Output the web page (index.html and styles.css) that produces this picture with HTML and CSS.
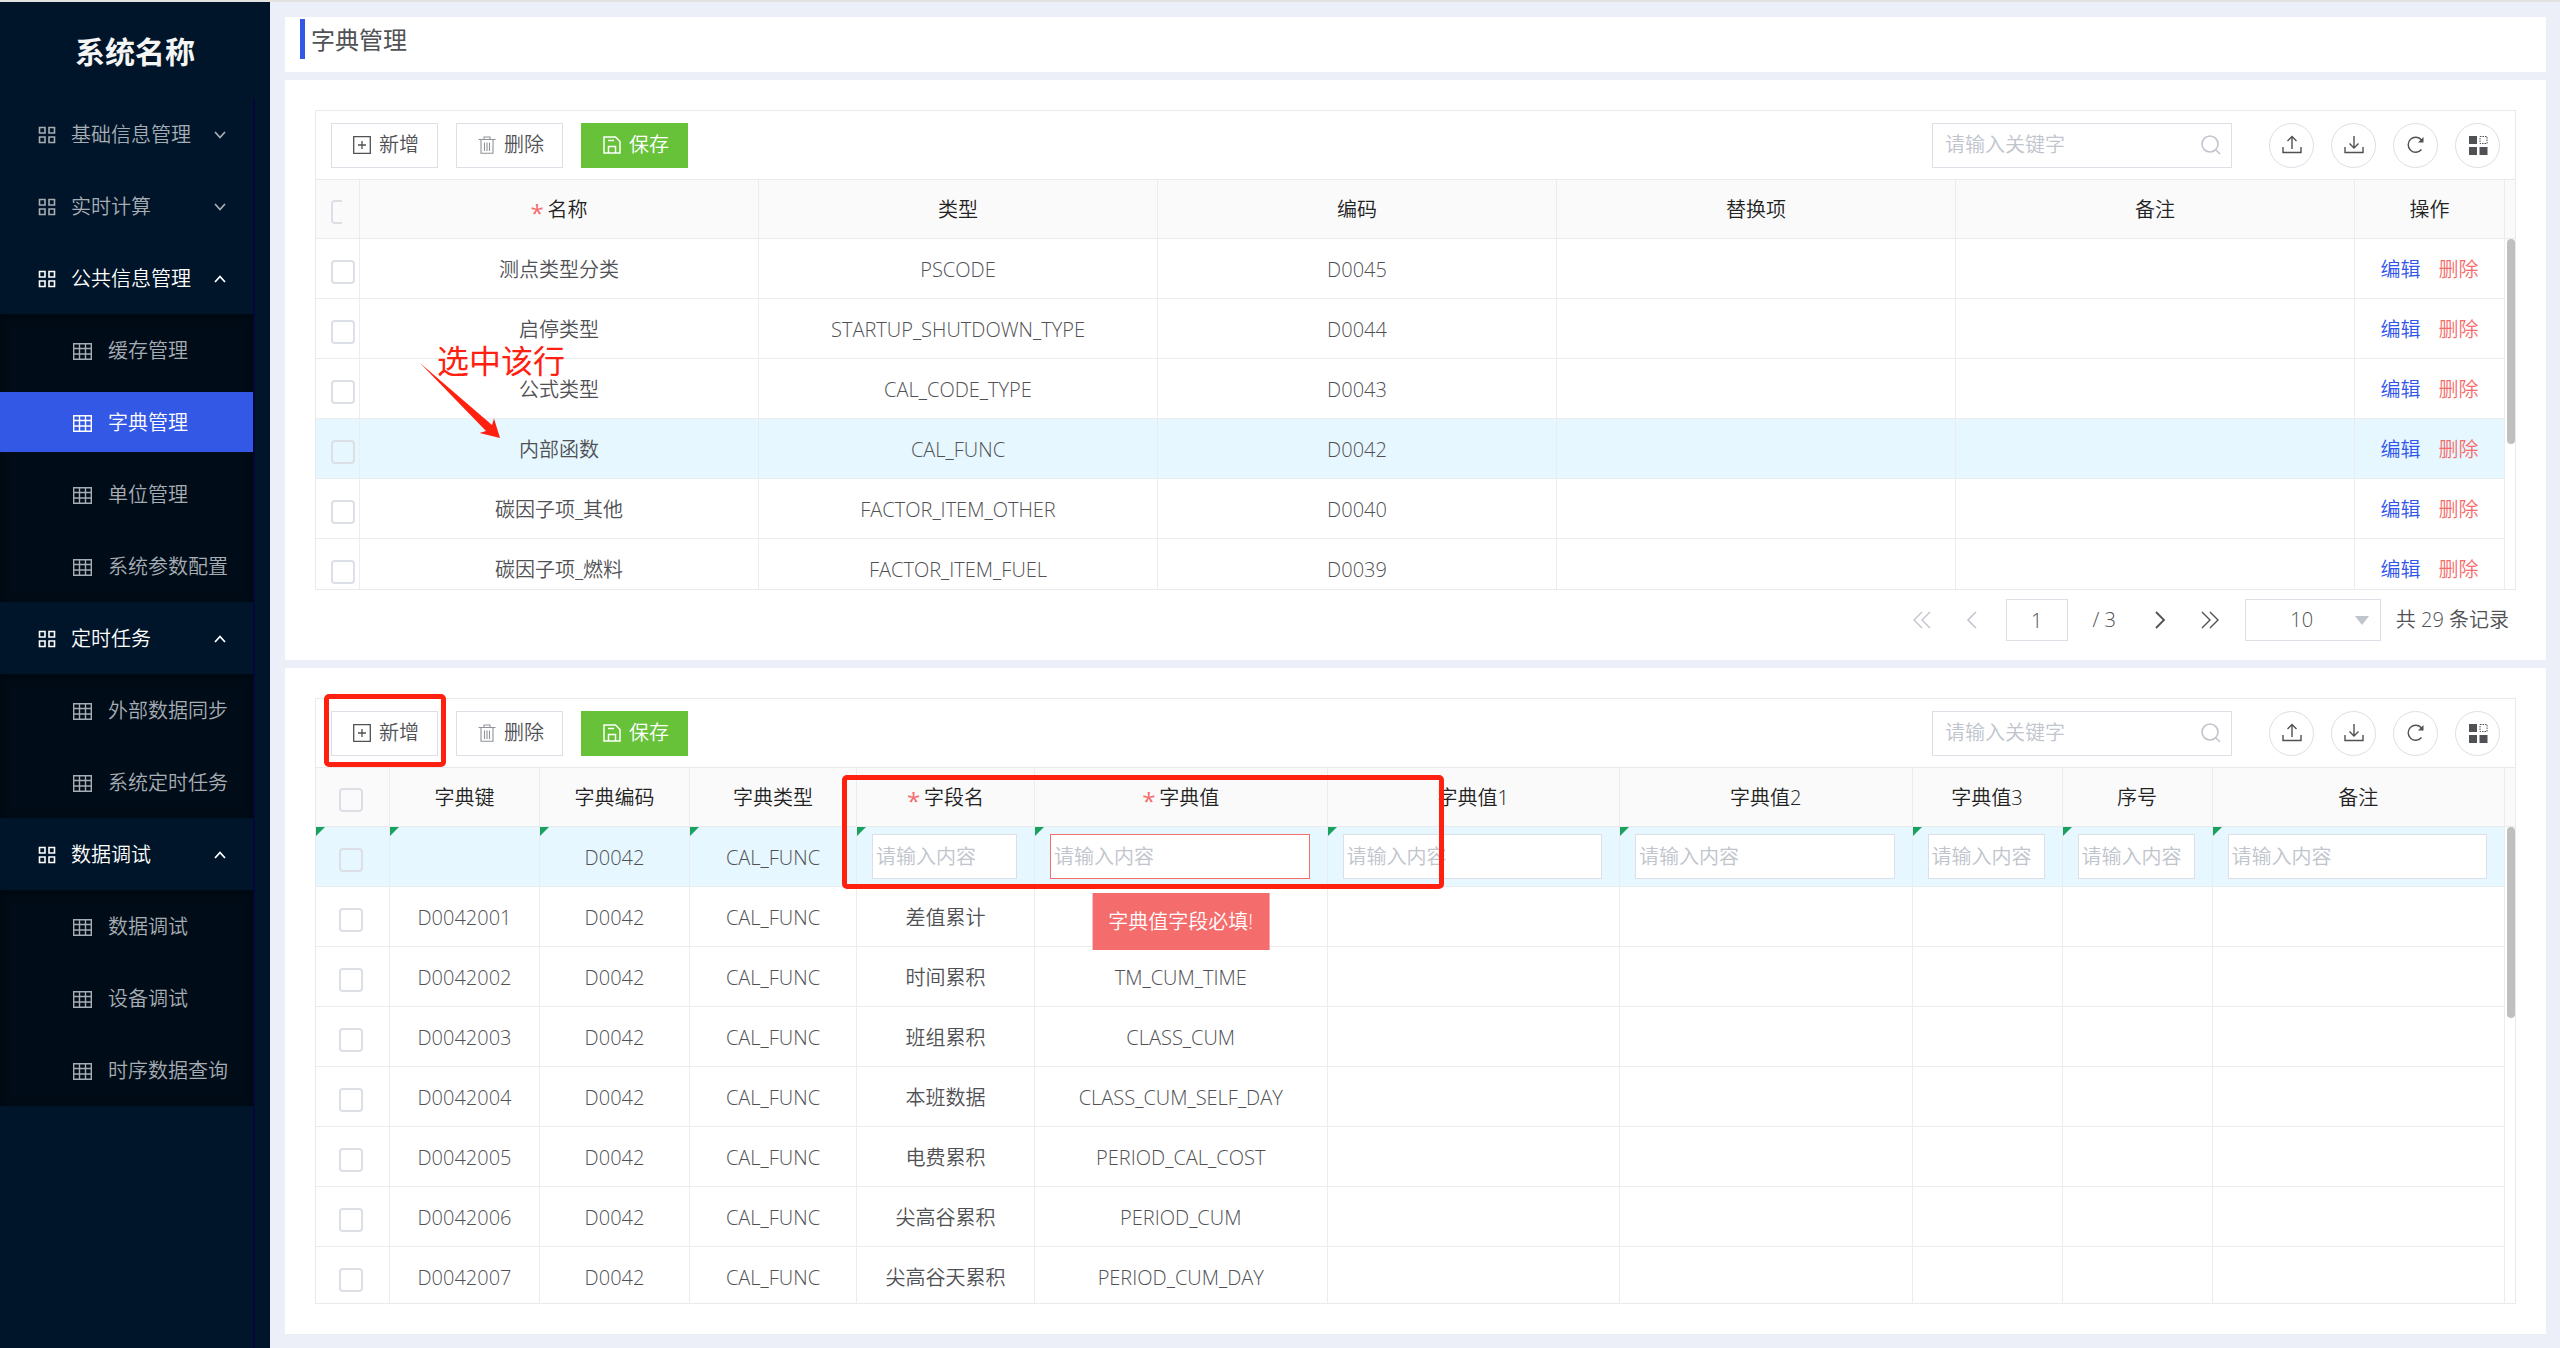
FILE: index.html
```html
<!DOCTYPE html>
<html lang="zh-CN">
<head>
    <meta charset="UTF-8">
    <meta name="viewport" content="width=device-width, initial-scale=1.0">
    <title>字典管理</title>
    <link rel="stylesheet" href="styles.css">
</head>
<body>
    <!-- 图标 -->
    <svg class="sprite" aria-hidden="true">
        <symbol id="i-menu" viewBox="0 0 18 18"><path d="M1.5 1.5h5.5v5.5H1.5zM11 1.5h5.5v5.5H11zM1.5 11h5.5v5.5H1.5zM11 11h5.5v5.5H11z" fill="none" stroke="currentColor" stroke-width="1.6"/></symbol>
        <symbol id="i-grid" viewBox="0 0 19 17"><path d="M.7.7h17.6v15.6H.7zM.7 5.5h17.6M.7 11h17.6M6.5.7v15.6M12.5.7v15.6" fill="none" stroke="currentColor" stroke-width="1.4"/></symbol>
        <symbol id="i-down" viewBox="0 0 12 8"><path d="M1 1l5 5.5L11 1" fill="none" stroke="currentColor" stroke-width="1.8"/></symbol>
        <symbol id="i-up" viewBox="0 0 12 8"><path d="M1 7l5-5.5L11 7" fill="none" stroke="currentColor" stroke-width="1.8"/></symbol>
        <symbol id="i-add" viewBox="0 0 18 18"><path d="M.7.7h16.6v16.6H.7zM9 5v8M5 9h8" fill="none" stroke="currentColor" stroke-width="1.3"/></symbol>
        <symbol id="i-del" viewBox="0 0 18 18"><path d="M.5 3.5h17M6 3.5V1h6v2.500M3 3.500v13.800h12V3.500M6.500 6.500v8.500M9 6.500v8.500M11.500 6.500v8.500" fill="none" stroke="currentColor" stroke-width="1.1"/></symbol>
        <symbol id="i-save" viewBox="0 0 18 18"><path d="M1 1h11.500L17 5.500V17H1zM5.500 17v-6.500h7V17M5 4.500h6" fill="none" stroke="currentColor" stroke-width="1.5"/></symbol>
        <symbol id="i-search" viewBox="0 0 20 20"><path d="M9 1a8 8 0 1 0 0 16a8 8 0 1 0 0-16zM14.800 14.800L19 19" fill="none" stroke="currentColor" stroke-width="1.6"/></symbol>
        <symbol id="i-upload" viewBox="0 0 20 20"><path d="M1 12v5.500h18V12M10 14V2M5.500 6L10 1.500L14.500 6" fill="none" stroke="currentColor" stroke-width="1.4"/></symbol>
        <symbol id="i-download" viewBox="0 0 20 20"><path d="M1 12v5.500h18V12M10 1v11.500M5.500 8.500L10 13l4.500-4.500" fill="none" stroke="currentColor" stroke-width="1.4"/></symbol>
        <symbol id="i-refresh" viewBox="0 0 20 20"><path d="M15.500 14.500A7.500 7.500 0 1 1 15.500 5" fill="none" stroke="currentColor" stroke-width="1.4"/><path d="M17.500 2v5.500h-5.500z" fill="currentColor"/></symbol>
        <symbol id="i-custom" viewBox="0 0 20 20"><path d="M1 1h8v8H1zM1 12h8v8H1zM11.500 12h8v8h-8z" fill="currentColor"/><path d="M12 1.500h7v7h-7z" fill="none" stroke="currentColor" stroke-dasharray="1.500 1"/></symbol>
        <symbol id="i-first" viewBox="0 0 20 18"><path d="M10 1L2 9l8 8M18 1l-8 8l8 8" fill="none" stroke="currentColor" stroke-width="1.4"/></symbol>
        <symbol id="i-prev" viewBox="0 0 20 18"><path d="M14 1L6 9l8 8" fill="none" stroke="currentColor" stroke-width="1.6"/></symbol>
        <symbol id="i-next" viewBox="0 0 20 18"><path d="M6 1l8 8l-8 8" fill="none" stroke="currentColor" stroke-width="1.8"/></symbol>
        <symbol id="i-last" viewBox="0 0 20 18"><path d="M10 1l8 8l-8 8M2 1l8 8l-8 8" fill="none" stroke="currentColor" stroke-width="1.4"/></symbol>
    </svg>

    <div class="app">
        <aside class="sidebar">
            <div class="logo">系统名称</div>
            <nav class="menu">
                <button class="menu-title"><svg class="ico-menu"><use href="#i-menu"/></svg><span>基础信息管理</span><svg class="caret"><use href="#i-down"/></svg></button>
                <button class="menu-title"><svg class="ico-menu"><use href="#i-menu"/></svg><span>实时计算</span><svg class="caret"><use href="#i-down"/></svg></button>
                <button class="menu-title open"><svg class="ico-menu"><use href="#i-menu"/></svg><span>公共信息管理</span><svg class="caret"><use href="#i-up"/></svg></button>
                <div class="submenu">
                    <a href="#"><svg class="ico-grid"><use href="#i-grid"/></svg>缓存管理</a>
                    <a href="#" class="active"><svg class="ico-grid"><use href="#i-grid"/></svg>字典管理</a>
                    <a href="#"><svg class="ico-grid"><use href="#i-grid"/></svg>单位管理</a>
                    <a href="#"><svg class="ico-grid"><use href="#i-grid"/></svg>系统参数配置</a>
                </div>
                <button class="menu-title open"><svg class="ico-menu"><use href="#i-menu"/></svg><span>定时任务</span><svg class="caret"><use href="#i-up"/></svg></button>
                <div class="submenu">
                    <a href="#"><svg class="ico-grid"><use href="#i-grid"/></svg>外部数据同步</a>
                    <a href="#"><svg class="ico-grid"><use href="#i-grid"/></svg>系统定时任务</a>
                </div>
                <button class="menu-title open"><svg class="ico-menu"><use href="#i-menu"/></svg><span>数据调试</span><svg class="caret"><use href="#i-up"/></svg></button>
                <div class="submenu">
                    <a href="#"><svg class="ico-grid"><use href="#i-grid"/></svg>数据调试</a>
                    <a href="#"><svg class="ico-grid"><use href="#i-grid"/></svg>设备调试</a>
                    <a href="#"><svg class="ico-grid"><use href="#i-grid"/></svg>时序数据查询</a>
                </div>
            </nav>
        </aside>

        <main class="main">
            <header class="page-header"><h1>字典管理</h1></header>

            <!-- 字典类型 -->
            <section class="panel">
                <div class="grid">
                    <div class="toolbar">
                        <button class="btn"><svg class="ico"><use href="#i-add"/></svg>新增</button>
                        <button class="btn"><svg class="ico muted"><use href="#i-del"/></svg>删除</button>
                        <button class="btn btn-success"><svg class="ico"><use href="#i-save"/></svg>保存</button>
                        <div class="search">
                            <input type="text" placeholder="请输入关键字" aria-label="关键字">
                            <svg><use href="#i-search"/></svg>
                        </div>
                        <div class="tools">
                            <button aria-label="导入"><svg><use href="#i-upload"/></svg></button>
                            <button aria-label="导出"><svg><use href="#i-download"/></svg></button>
                            <button aria-label="刷新"><svg><use href="#i-refresh"/></svg></button>
                            <button aria-label="列设置"><svg><use href="#i-custom"/></svg></button>
                        </div>
                    </div>
                    <div class="table-head">
                        <table>
                            <colgroup><col class="w-44"><col><col><col><col><col><col class="w-150"></colgroup>
                            <thead>
                                <tr>
                                    <th class="check-left"><span class="clip"><input type="checkbox" aria-label="全选"></span></th>
                                    <th class="required">名称</th><th>类型</th><th>编码</th><th>替换项</th><th>备注</th><th>操作</th>
                                </tr>
                            </thead>
                        </table>
                    </div>
                    <div class="table-body type-body">
                        <table>
                            <colgroup><col class="w-44"><col><col><col><col><col><col class="w-150"></colgroup>
                            <tbody>
                                <tr><td class="check-left"><input type="checkbox" aria-label="选择"></td><td>测点类型分类</td><td>PSCODE</td><td>D0045</td><td></td><td></td><td><a href="#" class="edit">编辑</a><a href="#" class="remove">删除</a></td></tr>
                                <tr><td class="check-left"><input type="checkbox" aria-label="选择"></td><td>启停类型</td><td>STARTUP_SHUTDOWN_TYPE</td><td>D0044</td><td></td><td></td><td><a href="#" class="edit">编辑</a><a href="#" class="remove">删除</a></td></tr>
                                <tr><td class="check-left"><input type="checkbox" aria-label="选择"></td><td>公式类型</td><td>CAL_CODE_TYPE</td><td>D0043</td><td></td><td></td><td><a href="#" class="edit">编辑</a><a href="#" class="remove">删除</a></td></tr>
                                <tr class="current"><td class="check-left"><input type="checkbox" aria-label="选择"></td><td>内部函数</td><td>CAL_FUNC</td><td>D0042</td><td></td><td></td><td><a href="#" class="edit">编辑</a><a href="#" class="remove">删除</a></td></tr>
                                <tr><td class="check-left"><input type="checkbox" aria-label="选择"></td><td>碳因子项_其他</td><td>FACTOR_ITEM_OTHER</td><td>D0040</td><td></td><td></td><td><a href="#" class="edit">编辑</a><a href="#" class="remove">删除</a></td></tr>
                                <tr><td class="check-left"><input type="checkbox" aria-label="选择"></td><td>碳因子项_燃料</td><td>FACTOR_ITEM_FUEL</td><td>D0039</td><td></td><td></td><td><a href="#" class="edit">编辑</a><a href="#" class="remove">删除</a></td></tr>
                            </tbody>
                        </table>
                        <span class="thumb thumb-type"></span>
                    </div>
                    <span class="note">选中该行</span>
                    <svg class="note-arrow" viewBox="0 0 80 75"><path d="M0 0L72 62L74 55.500L80 75L59.500 70L66 68z" fill="#ff2010"/></svg>
                </div>
                <div class="pager">
                    <button class="off" aria-label="首页"><svg><use href="#i-first"/></svg></button>
                    <button class="off" aria-label="上一页"><svg><use href="#i-prev"/></svg></button>
                    <input type="text" value="1" aria-label="页码">
                    <span class="pages">/ 3</span>
                    <button aria-label="下一页"><svg><use href="#i-next"/></svg></button>
                    <button aria-label="末页"><svg><use href="#i-last"/></svg></button>
                    <div class="size"><select aria-label="每页条数"><option>10</option><option>20</option><option>50</option></select></div>
                    <span>共 29 条记录</span>
                </div>
            </section>

            <!-- 字典项 -->
            <section class="panel panel-items">
                <div class="grid">
                    <div class="toolbar">
                        <button class="btn"><svg class="ico"><use href="#i-add"/></svg>新增</button>
                        <button class="btn"><svg class="ico muted"><use href="#i-del"/></svg>删除</button>
                        <button class="btn btn-success"><svg class="ico"><use href="#i-save"/></svg>保存</button>
                        <div class="search">
                            <input type="text" placeholder="请输入关键字" aria-label="关键字">
                            <svg><use href="#i-search"/></svg>
                        </div>
                        <div class="tools">
                            <button aria-label="导入"><svg><use href="#i-upload"/></svg></button>
                            <button aria-label="导出"><svg><use href="#i-download"/></svg></button>
                            <button aria-label="刷新"><svg><use href="#i-refresh"/></svg></button>
                            <button aria-label="列设置"><svg><use href="#i-custom"/></svg></button>
                        </div>
                    </div>
                    <div class="table-head">
                        <table>
                            <colgroup><col class="w-74"><col class="w-150"><col class="w-150"><col class="w-167"><col class="w-178"><col><col><col><col class="w-150"><col class="w-150"><col></colgroup>
                            <thead>
                                <tr>
                                    <th class="check"><input type="checkbox" aria-label="全选"></th>
                                    <th>字典键</th><th>字典编码</th><th>字典类型</th><th class="required">字段名</th><th class="required">字典值</th><th>字典值1</th><th>字典值2</th><th>字典值3</th><th>序号</th><th>备注</th>
                                </tr>
                            </thead>
                        </table>
                    </div>
                    <div class="table-body">
                        <table>
                            <colgroup><col class="w-74"><col class="w-150"><col class="w-150"><col class="w-167"><col class="w-178"><col><col><col><col class="w-150"><col class="w-150"><col></colgroup>
                            <tbody>
                                <tr class="current new-row">
                                    <td class="check"><input type="checkbox" aria-label="选择"></td>
                                    <td></td>
                                    <td>D0042</td>
                                    <td>CAL_FUNC</td>
                                    <td class="edit-cell"><input type="text" placeholder="请输入内容" aria-label="字段名"></td>
                                    <td class="edit-cell"><input type="text" class="error" placeholder="请输入内容" aria-label="字典值"><span class="tip">字典值字段必填!</span></td>
                                    <td class="edit-cell"><input type="text" placeholder="请输入内容" aria-label="字典值1"></td>
                                    <td class="edit-cell"><input type="text" placeholder="请输入内容" aria-label="字典值2"></td>
                                    <td class="edit-cell"><input type="text" placeholder="请输入内容" aria-label="字典值3"></td>
                                    <td class="edit-cell"><input type="text" placeholder="请输入内容" aria-label="序号"></td>
                                    <td class="edit-cell"><input type="text" placeholder="请输入内容" aria-label="备注"></td>
                                </tr>
                                <tr><td class="check"><input type="checkbox" aria-label="选择"></td><td>D0042001</td><td>D0042</td><td>CAL_FUNC</td><td>差值累计</td><td></td><td></td><td></td><td></td><td></td><td></td></tr>
                                <tr><td class="check"><input type="checkbox" aria-label="选择"></td><td>D0042002</td><td>D0042</td><td>CAL_FUNC</td><td>时间累积</td><td>TM_CUM_TIME</td><td></td><td></td><td></td><td></td><td></td></tr>
                                <tr><td class="check"><input type="checkbox" aria-label="选择"></td><td>D0042003</td><td>D0042</td><td>CAL_FUNC</td><td>班组累积</td><td>CLASS_CUM</td><td></td><td></td><td></td><td></td><td></td></tr>
                                <tr><td class="check"><input type="checkbox" aria-label="选择"></td><td>D0042004</td><td>D0042</td><td>CAL_FUNC</td><td>本班数据</td><td>CLASS_CUM_SELF_DAY</td><td></td><td></td><td></td><td></td><td></td></tr>
                                <tr><td class="check"><input type="checkbox" aria-label="选择"></td><td>D0042005</td><td>D0042</td><td>CAL_FUNC</td><td>电费累积</td><td>PERIOD_CAL_COST</td><td></td><td></td><td></td><td></td><td></td></tr>
                                <tr><td class="check"><input type="checkbox" aria-label="选择"></td><td>D0042006</td><td>D0042</td><td>CAL_FUNC</td><td>尖高谷累积</td><td>PERIOD_CUM</td><td></td><td></td><td></td><td></td><td></td></tr>
                                <tr><td class="check"><input type="checkbox" aria-label="选择"></td><td>D0042007</td><td>D0042</td><td>CAL_FUNC</td><td>尖高谷天累积</td><td>PERIOD_CUM_DAY</td><td></td><td></td><td></td><td></td><td></td></tr>
                            </tbody>
                        </table>
                        <span class="thumb"></span>
                    </div>
                    <span class="mark mark-add"></span>
                    <span class="mark mark-fields"></span>
                </div>
            </section>
        </main>
    </div>
</body>
</html>
```
FILE: styles.css
```css
* {
    box-sizing: border-box;
}
body {
    margin: 0;
    font-family: "Open Sans", "Noto Sans CJK SC", sans-serif;
    font-size: 20px;
    font-weight: 350;
    line-height: 28px;
    color: #505154;
    background: #eceff8;
}
button, input, select {
    font: inherit;
    color: inherit;
    margin: 0;
    padding: 0;
    border: none;
    background: none;
}
a {
    text-decoration: none;
}
svg {
    flex: none;
}
.sprite {
    position: absolute;
    width: 0;
    height: 0;
}
.app {
    display: flex;
    height: 100vh;
    border-top: 2px solid #e2e3e0;
}

/* 侧边栏 */
.sidebar {
    display: flex;
    flex-direction: column;
    flex: none;
    width: 270px;
    background: #001529;
}
.logo {
    height: 96px;
    padding-top: 28px;
    font-size: 30px;
    font-weight: 700;
    line-height: 44px;
    text-align: center;
    color: #f5f5f5;
}
.menu {
    flex: 1;
    width: 255px;
    border-right: 2px solid #06063a;
    color: #a6adb4;
}
.menu-title {
    display: flex;
    align-items: center;
    width: 100%;
    height: 72px;
    padding: 2px 27px 0 38px;
    text-align: left;
}
.menu-title.open {
    color: #fff;
}
.menu-title span {
    flex: 1;
    margin-left: 15px;
}
.ico-menu {
    width: 18px;
    height: 18px;
}
.caret {
    width: 12px;
    height: 8px;
}
.submenu {
    display: flex;
    flex-direction: column;
    gap: 12px;
    padding: 6px 0;
    background: #000c17;
    box-shadow: inset 0 2px 8px rgba(0, 0, 0, 0.45);
}
.submenu a {
    display: flex;
    align-items: center;
    gap: 16px;
    height: 60px;
    padding: 2px 0 0 73px;
    color: #a6adb4;
}
.submenu a.active {
    color: #fff;
    background: #3458e6;
}
.ico-grid {
    width: 19px;
    height: 17px;
}

/* 内容区 */
.main {
    display: flex;
    flex-direction: column;
    flex: 1;
    gap: 8px;
    min-width: 0;
    padding: 15px 14px 14px 15px;
}
.page-header {
    height: 55px;
    padding: 2px 15px;
    background: #fff;
}
.page-header h1 {
    margin: 0;
    padding: 2px 0 0 6px;
    border-left: 5px solid #3458e6;
    font-size: 24px;
    font-weight: 400;
    line-height: 38px;
}
.panel {
    display: flex;
    flex-direction: column;
    padding: 30px;
    background: #fff;
}
.panel:not(.panel-items) {
    padding-bottom: 10px;
}
.panel-items {
    flex: 1;
    min-height: 0;
}
.grid {
    position: relative;
    display: flex;
    flex-direction: column;
    flex: 1;
    min-height: 0;
    border: 1px solid #e8eaec;
}

/* 工具栏 */
.toolbar {
    display: flex;
    align-items: center;
    gap: 18px;
    height: 69px;
    padding: 0 15px;
    border-bottom: 1px solid #e8eaec;
}
.btn {
    display: flex;
    align-items: center;
    gap: 8px;
    width: 107px;
    height: 45px;
    padding-left: 21px;
    border: 1px solid #dcdfe6;
    background: #fff;
}
.btn-success {
    color: #fff;
    border-color: #67c23a;
    background: #67c23a;
}
.ico {
    width: 18px;
    height: 18px;
}
.muted {
    color: #909399;
}
.search {
    display: flex;
    align-items: center;
    width: 300px;
    height: 45px;
    margin-left: auto;
    padding: 0 10px 0 12px;
    border: 1px solid #dcdfe6;
}
.search input {
    flex: 1;
    min-width: 0;
}
.search svg {
    width: 20px;
    height: 20px;
    color: #c0c4cc;
}
input::placeholder {
    color: #c0c4cc;
}
.tools {
    display: flex;
    gap: 17px;
    margin-left: 19px;
}
.tools button {
    display: flex;
    align-items: center;
    justify-content: center;
    width: 45px;
    height: 45px;
    border: 1px solid #dcdfe6;
    border-radius: 50%;
}
.tools svg {
    width: 20px;
    height: 20px;
}

/* 表格 */
table {
    width: 100%;
    table-layout: fixed;
    border-collapse: separate;
    border-spacing: 0;
}
.w-44 { width: 44px; }
.w-74 { width: 74px; }
.w-150 { width: 150px; }
.w-167 { width: 167px; }
.w-178 { width: 178px; }
th, td {
    height: 60px;
    padding: 2px 0 0;
    border-right: 1px solid #ebecee;
    border-bottom: 1px solid #ebecee;
    text-align: center;
    white-space: nowrap;
}
th {
    height: 58px;
    border-bottom: none;
    font-weight: 350;
    color: #222;
}
.table-head {
    padding-right: 10px;
    border-bottom: 1px solid #e8eaec;
    background: #fafafa;
}
.table-body {
    position: relative;
    flex: 1;
    min-height: 0;
    padding-right: 10px;
    overflow: hidden;
}
.type-body {
    flex: none;
    height: 350px;
}
.current td {
    background: #e6f7ff;
}
.required::before {
    content: "*";
    margin-right: 4px;
    font-size: 24px;
    font-weight: 400;
    line-height: 0;
    vertical-align: -5px;
    color: #f56c6c;
}
.check-left {
    padding: 6px 0 0 15px;
    text-align: left;
}
.check {
    padding: 6px 3px 0 0;
}
.clip {
    display: block;
    width: 11px;
    overflow: hidden;
}
input[type="checkbox"] {
    appearance: none;
    display: block;
    width: 24px;
    height: 24px;
    border: 2px solid #dcdfe6;
    border-radius: 4px;
}
.check input {
    margin: 0 auto;
}
.edit {
    margin-right: 18px;
    color: #2f54eb;
}
.remove {
    color: #f56c6c;
}
.new-row td {
    position: relative;
}
.new-row td::before {
    content: "";
    position: absolute;
    top: 0;
    left: 0;
    border-top: 9px solid #18a15f;
    border-right: 9px solid transparent;
}
.edit-cell {
    padding: 0 17px 0 15px;
}
.edit-cell input {
    display: block;
    width: 100%;
    height: 45px;
    padding: 0 3px;
    border: 1px solid #dcdfe6;
    background: #fff;
}
.edit-cell .error {
    border-color: #f56c6c;
}
.tip {
    position: absolute;
    top: 66px;
    left: 50%;
    z-index: 2;
    padding: 0 16px;
    line-height: 57px;
    color: #fff;
    background: #f56c6c;
    transform: translateX(-50%);
}
.thumb {
    position: absolute;
    top: 0;
    right: 0;
    width: 8px;
    height: 191px;
    border-radius: 4px;
    background: #bfbfbf;
}
.thumb-type {
    height: 205px;
}

/* 分页 */
.pager {
    display: flex;
    align-items: center;
    justify-content: flex-end;
    height: 60px;
    padding-right: 7px;
}
.pager button {
    display: flex;
    align-items: center;
    justify-content: center;
    width: 50px;
    height: 42px;
}
.pager button svg {
    width: 20px;
    height: 18px;
}
.pager .off {
    color: #c0c4cc;
}
.pager input {
    width: 62px;
    height: 42px;
    margin-left: 9px;
    border: 1px solid #dcdfe6;
    text-align: center;
}
.pages {
    width: 67px;
    padding-left: 6px;
    text-align: center;
}
.size {
    position: relative;
    margin: 0 15px 0 10px;
}
.size select {
    appearance: none;
    width: 136px;
    height: 42px;
    padding-right: 22px;
    border: 1px solid #dcdfe6;
    text-align-last: center;
}
.size::after {
    content: "";
    position: absolute;
    top: 17px;
    right: 12px;
    border: 7px solid transparent;
    border-top: 9px solid #c0c4cc;
    border-bottom: none;
}

/* 标注 */
.note {
    position: absolute;
    top: 234px;
    left: 121px;
    font-size: 32px;
    font-weight: 400;
    line-height: 32px;
    color: #ff2010;
}
.note-arrow {
    position: absolute;
    top: 252px;
    left: 104px;
    width: 80px;
    height: 75px;
}
.mark {
    position: absolute;
    z-index: 3;
    border: 5px solid #ff2010;
    border-radius: 5px;
}
.mark-add {
    top: -5px;
    left: 8px;
    width: 122px;
    height: 73px;
}
.mark-fields {
    top: 76px;
    left: 526px;
    width: 602px;
    height: 114px;
}
```
